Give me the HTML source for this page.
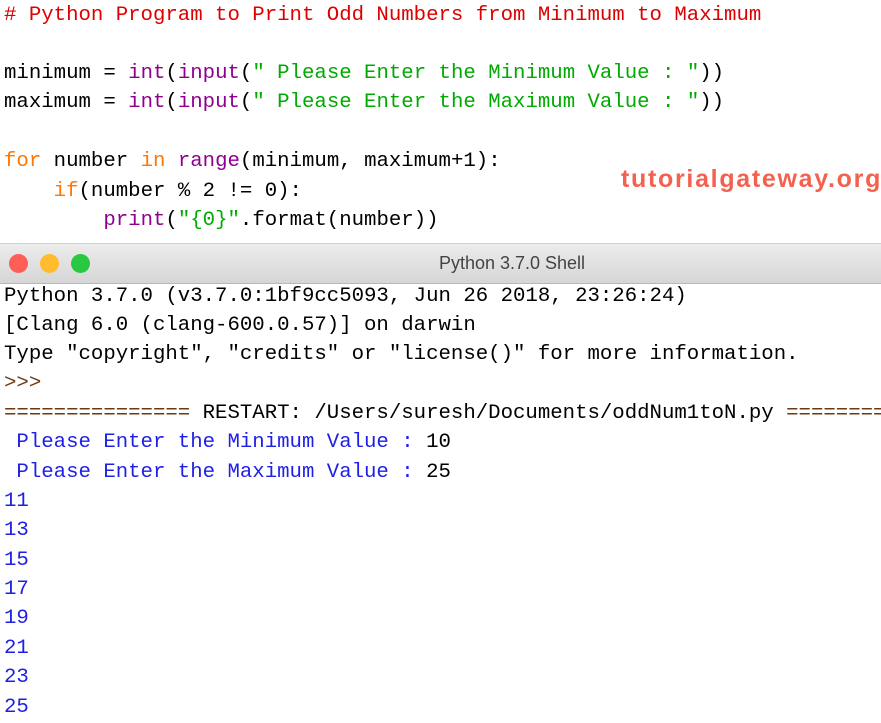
<!DOCTYPE html>
<html><head><style>
body{margin:0;width:881px;height:722px;overflow:hidden;background:#fff;font-family:"Liberation Mono",monospace;font-size:20.7px;}
.l{position:absolute;left:4px;white-space:pre;line-height:29.5px;}
.c{color:#dd0000}.k{color:#ff7700}.b{color:#900090}.s{color:#00aa00}.u{color:#1f1fe6}.p{color:#6b3a14}
#bar{position:absolute;left:0;top:243px;width:881px;height:39px;background:linear-gradient(#ececec,#d6d6d6);border-top:1px solid #cfcfcf;border-bottom:1px solid #b8b8b8;}
.d{position:absolute;top:10px;width:19px;height:19px;border-radius:50%}
#title{position:absolute;left:0;width:1024px;top:9px;text-align:center;font-family:"Liberation Sans",sans-serif;font-size:18px;color:#444}
#logo{position:absolute;left:621px;top:165px;font-family:"Liberation Sans",sans-serif;font-weight:bold;font-size:25px;color:#f4614e;letter-spacing:1.7px}
</style></head><body>
<div class="l c" style="top:1px"># Python Program to Print Odd Numbers from Minimum to Maximum</div>
<div class="l" style="top:59px">minimum = <span class="b">int</span>(<span class="b">input</span>(<span class="s">" Please Enter the Minimum Value : "</span>))</div>
<div class="l" style="top:88px">maximum = <span class="b">int</span>(<span class="b">input</span>(<span class="s">" Please Enter the Maximum Value : "</span>))</div>
<div class="l" style="top:147px"><span class="k">for</span> number <span class="k">in</span> <span class="b">range</span>(minimum, maximum+1):</div>
<div class="l" style="top:177px">    <span class="k">if</span>(number % 2 != 0):</div>
<div class="l" style="top:206px">        <span class="b">print</span>(<span class="s">"{0}"</span>.format(number))</div>
<div id="logo">tutorialgateway.org</div>
<div id="bar"><div class="d" style="left:9px;background:#fd5f57"></div><div class="d" style="left:40px;background:#febc2e"></div><div class="d" style="left:71px;background:#28c840"></div><div id="title">Python 3.7.0 Shell</div></div>
<div class="l" style="top:282px">Python 3.7.0 (v3.7.0:1bf9cc5093, Jun 26 2018, 23:26:24)</div>
<div class="l" style="top:311px">[Clang 6.0 (clang-600.0.57)] on darwin</div>
<div class="l" style="top:340px">Type "copyright", "credits" or "license()" for more information.</div>
<div class="l p" style="top:369px">&gt;&gt;&gt;</div>
<div class="l" style="top:399px"><span class="p">===============</span> RESTART: /Users/suresh/Documents/oddNum1toN.py <span class="p">=========</span></div>
<div class="l" style="top:428px"><span class="u"> Please Enter the Minimum Value : </span>10</div>
<div class="l" style="top:458px"><span class="u"> Please Enter the Maximum Value : </span>25</div>
<div class="l u" style="top:487px">11</div>
<div class="l u" style="top:516px">13</div>
<div class="l u" style="top:546px">15</div>
<div class="l u" style="top:575px">17</div>
<div class="l u" style="top:604px">19</div>
<div class="l u" style="top:634px">21</div>
<div class="l u" style="top:663px">23</div>
<div class="l u" style="top:693px">25</div>
</body></html>
